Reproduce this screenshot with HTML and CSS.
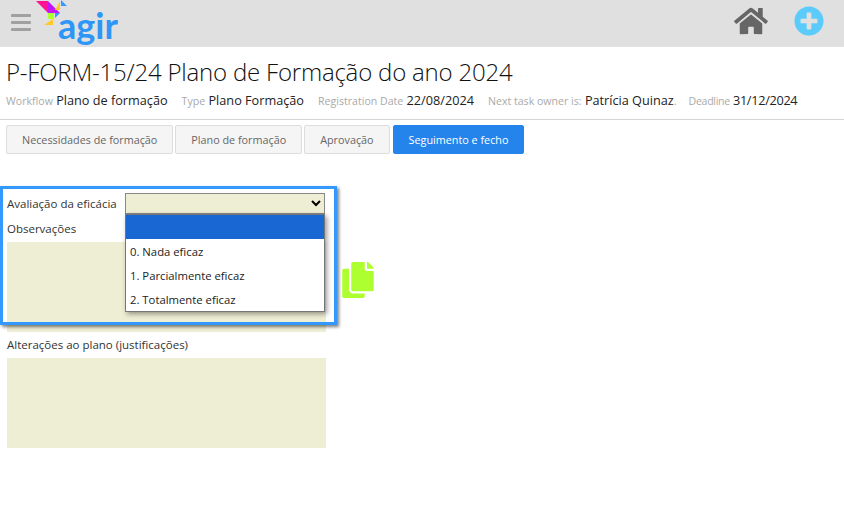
FILE: index.html
```html
<!DOCTYPE html>
<html lang="en">

<head>
    <meta charset="UTF-8">
    <meta name="viewport" content="width=device-width, initial-scale=1.0">
    <title>P-FORM-15/24</title>
    <link rel="stylesheet" href="styles.css">
</head>

<body>
    <header class="top-bar">
        <div class="top-left">
            <div class="menu-btn"><span></span><span></span><span></span></div>
            <div class="logo">
                <svg class="logo-bird" width="34" height="28" viewBox="0 0 34 28">
                    <polygon points="0,1 12,1 12,13" fill="#ff1493"/>
                    <polygon points="12,1 24,13 12,13" fill="#c316f5"/>
                    <polygon points="19,10 24,1 24,10" fill="#ffc929"/>
                    <polygon points="25,0 31,6 25,6" fill="#3399ff"/>
                    <rect x="12" y="13" width="6" height="6" fill="#adff2f"/>
                    <polygon points="19,13 24,13 19,18" fill="#3399ff"/>
                    <polygon points="8,25 17,19 17,25" fill="#ffc929"/>
                </svg>
                <span class="logo-text">agir</span>
            </div>
        </div>
        <div class="top-right">
            <svg class="home-icon" width="34" height="30" viewBox="0 0 576 512">
                <path fill="#666" d="M280.37 148.26L96 300.11V464a16 16 0 0 0 16 16l112.06-.29a16 16 0 0 0 15.92-16V368a16 16 0 0 1 16-16h64a16 16 0 0 1 16 16v95.64a16 16 0 0 0 16 16.05L464 480a16 16 0 0 0 16-16V300L295.67 148.26a12.19 12.19 0 0 0-15.3 0zM571.6 251.47L488 182.56V44.05a12 12 0 0 0-12-12h-56a12 12 0 0 0-12 12v72.61L318.47 43a48 48 0 0 0-61 0L4.34 251.47a12 12 0 0 0-1.6 16.9l25.5 31A12 12 0 0 0 45.15 301l235.22-193.74a12.19 12.19 0 0 1 15.3 0L530.9 301a12 12 0 0 0 16.9-1.6l25.5-31a12 12 0 0 0-1.7-16.93z"/>
            </svg>
            <svg class="plus-icon" width="30" height="30" viewBox="0 0 512 512">
                <path fill="#5bcbfb" d="M256 8C119 8 8 119 8 256s111 248 248 248 248-111 248-248S393 8 256 8zm144 276c0 6.6-5.4 12-12 12h-92v92c0 6.6-5.4 12-12 12h-56c-6.6 0-12-5.4-12-12v-92h-92c-6.6 0-12-5.4-12-12v-56c0-6.6 5.4-12 12-12h92v-92c0-6.6 5.4-12 12-12h56c6.6 0 12 5.4 12 12v92h92c6.6 0 12 5.4 12 12v56z"/>
            </svg>
        </div>
    </header>

    <section class="page-head">
        <h1>P-FORM-15/24 Plano de Formação do ano 2024</h1>
        <div class="meta">
            <span class="meta-item"><small>Workflow</small> Plano de formação</span>
            <span class="meta-item"><small>Type</small> Plano Formação</span>
            <span class="meta-item"><small>Registration Date</small> 22/08/2024</span>
            <span class="meta-item"><small>Next task owner is:</small> Patrícia Quinaz<small>.</small></span>
            <span class="meta-item deadline"><small>Deadline</small> 31/12/2024</span>
        </div>
    </section>

    <nav class="tabs">
        <a class="tab" href="#">Necessidades de formação</a>
        <a class="tab" href="#">Plano de formação</a>
        <a class="tab" href="#">Aprovação</a>
        <a class="tab active" href="#">Seguimento e fecho</a>
    </nav>

    <main class="form-area">
        <div class="highlight"></div>
        <div class="field-row">
            <label for="eficacia">Avaliação da eficácia</label>
            <div class="select-wrap">
                <select id="eficacia">
                    <option></option>
                    <option>0. Nada eficaz</option>
                    <option>1. Parcialmente eficaz</option>
                    <option>2. Totalmente eficaz</option>
                </select>
                <ul class="select-list">
                    <li class="selected"></li>
                    <li>0. Nada eficaz</li>
                    <li>1. Parcialmente eficaz</li>
                    <li>2. Totalmente eficaz</li>
                </ul>
            </div>
        </div>
        <label class="field-label" for="obs">Observações</label>
        <div class="obs-row">
            <textarea id="obs"></textarea>
            <svg class="copy-icon" width="32" height="36" viewBox="0 0 448 512">
                <path fill="#adff2f" d="M320 448v40c0 13.255-10.745 24-24 24H24c-13.255 0-24-10.745-24-24V120c0-13.255 10.745-24 24-24h72v296c0 30.879 25.121 56 56 56h168zm0-344V0H152c-13.255 0-24 10.745-24 24v368c0 13.255 10.745 24 24 24h272c13.255 0 24-10.745 24-24V128H344c-13.2 0-24-10.8-24-24zm120.971-31.029L375.029 7.029A24 24 0 0 0 358.059 0H352v96h96v-6.059a24 24 0 0 0-7.029-16.97z"/>
            </svg>
        </div>
        <label class="field-label" for="alt">Alterações ao plano (justificações)</label>
        <textarea id="alt"></textarea>
    </main>
</body>

</html>
```

FILE: styles.css
```css
body {
    margin: 0;
    padding: 0;
    background: #fff;
    color: #222;
    font-family: "Open Sans", "Noto Sans", sans-serif;
}

.top-bar {
    height: 47px;
    background: #e0e0e0;
    display: flex;
    justify-content: space-between;
}

.top-left {
    display: flex;
    padding-left: 11px;
}

.menu-btn {
    width: 20px;
    padding-top: 14px;
    display: flex;
    flex-direction: column;
    gap: 4px;
}

.menu-btn span {
    display: block;
    height: 3px;
    border-radius: 1px;
    background: #a0a0a0;
}

.logo {
    position: relative;
    margin-left: 5px;
    width: 100px;
}

.logo-bird {
    position: absolute;
    left: 0;
    top: 0;
}

.logo-text {
    position: absolute;
    left: 22px;
    top: 3px;
    font-family: "Lato", sans-serif;
    font-size: 36px;
    line-height: 44px;
    font-weight: 700;
    color: #2e96f7;
}

.top-right {
    display: flex;
    gap: 26px;
    padding: 6px 20px 0 0;
}

.page-head {
    padding: 0 6px;
    height: 72px;
    border-bottom: 1px solid #d4d4d4;
}

.page-head h1 {
    margin: 0;
    padding-top: 8px;
    font-size: 24px;
    line-height: 34px;
    font-weight: 300;
    color: #111;
    letter-spacing: -0.2px;
}

.meta {
    display: flex;
    gap: 14px;
    margin-top: 2px;
    font-size: 12.7px;
    line-height: 18px;
    color: #222;
}

.meta small {
    font-size: 10.6px;
    color: #aaa;
}

.meta .deadline {
    margin-left: -2px;
    letter-spacing: -0.3px;
}

.tabs {
    display: flex;
    gap: 2px;
    padding: 5px 6px 0;
}

.tab {
    padding: 0 15px;
    height: 27px;
    line-height: 28px;
    border: 1px solid #ddd;
    border-radius: 2px;
    background: #f5f5f5;
    color: #666;
    font-size: 10.8px;
    text-decoration: none;
}

.tab.active {
    margin-left: 1px;
    background: #2584ec;
    border-color: #2584ec;
    color: #fff;
}

.form-area {
    position: relative;
    padding: 39px 7px 0;
    font-size: 11.5px;
    color: #333;
}

.highlight {
    position: absolute;
    left: 0;
    top: 32px;
    width: 331px;
    height: 133px;
    border: 3px solid #3399ff;
    box-shadow: 2px 2px 3px rgba(0, 0, 0, 0.5);
    pointer-events: none;
}

.field-row {
    display: flex;
    align-items: center;
    height: 21px;
    margin-bottom: 2px;
}

.field-row label {
    width: 118px;
}

.select-wrap {
    position: relative;
}

.select-wrap select {
    display: block;
    width: 200px;
    height: 21px;
    background: #eeeed5;
    border: 1px solid #888;
    font-size: 12px;
}

.select-list {
    position: absolute;
    left: 0;
    top: 21px;
    width: 198px;
    margin: 0;
    padding: 0;
    list-style: none;
    background: #fff;
    border: 1px solid #777;
    box-shadow: 2px 2px 5px rgba(0, 0, 0, 0.4);
    color: #222;
    font-size: 11.3px;
    z-index: 2;
}

.select-list li {
    height: 24px;
    line-height: 26px;
    padding-left: 4px;
}

.select-list li.selected {
    background: #1967d2;
}

.field-label {
    display: block;
    height: 26px;
    padding-top: 5px;
    box-sizing: border-box;
    line-height: 16px;
}

.obs-row {
    display: flex;
    align-items: flex-start;
}

textarea {
    display: block;
    width: 319px;
    height: 90px;
    margin: 0;
    padding: 0;
    border: none;
    background: #eeeed5;
    resize: none;
}

.copy-icon {
    margin: 20px 0 0 16px;
}
```
